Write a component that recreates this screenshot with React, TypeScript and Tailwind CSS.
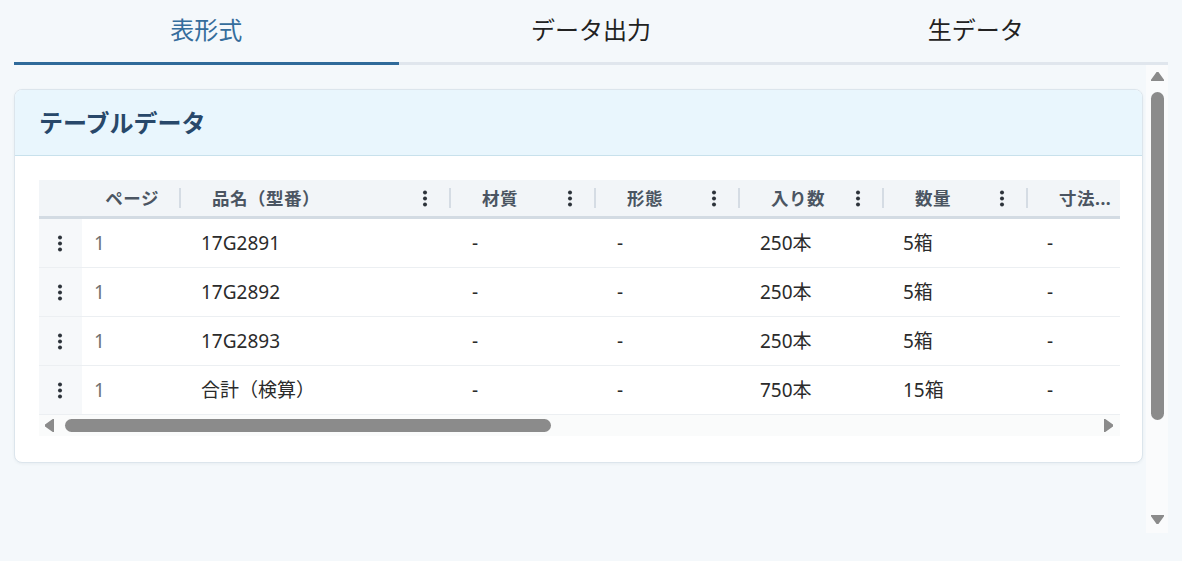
import { ReactNode } from 'react'

interface Row {
  page: string
  name: string
  material: string
  form: string
  perUnit: string
  qty: string
  size: string
}

const rows: Row[] = [
  { page: '1', name: '17G2891', material: '-', form: '-', perUnit: '250本', qty: '5箱', size: '-' },
  { page: '1', name: '17G2892', material: '-', form: '-', perUnit: '250本', qty: '5箱', size: '-' },
  { page: '1', name: '17G2893', material: '-', form: '-', perUnit: '250本', qty: '5箱', size: '-' },
  { page: '1', name: '合計（検算）', material: '-', form: '-', perUnit: '750本', qty: '15箱', size: '-' },
]

const tabs = ['表形式', 'データ出力', '生データ']

// column grid shared by header and body rows
const cols = 'grid grid-cols-[43px_99px_270px_145px_144px_144px_144px_92px]'

const Kebab = ({ className = '' }: { className?: string }) => (
  <svg width="6" height="17" viewBox="0 0 6 17" className={className}>
    <circle cx="3" cy="2.5" r="2" fill="#2d333a" />
    <circle cx="3" cy="8.5" r="2" fill="#2d333a" />
    <circle cx="3" cy="14.5" r="2" fill="#2d333a" />
  </svg>
)

const Sep = () => <div className="w-[2px] h-[20px] bg-[#d5dce4] shrink-0" />

const HeadCell = ({ children, menu = true }: { children: ReactNode; menu?: boolean }) => (
  <div className="flex items-center h-full pl-[31px] min-w-0">
    <span className="whitespace-nowrap">{children}</span>
    <div className="flex-1" />
    {menu && <Kebab className="mr-[21px]" />}
    <Sep />
  </div>
)

const Arrow = ({ dir }: { dir: 'up' | 'down' | 'left' | 'right' }) => {
  const pts = {
    up: '0,9 6.5,0 13,9',
    down: '0,0 13,0 6.5,9',
    left: '9,0 9,13 0,6.5',
    right: '0,0 9,6.5 0,13',
  }[dir]
  const vertical = dir === 'up' || dir === 'down'
  return (
    <svg width={vertical ? 13 : 9} height={vertical ? 9 : 13} viewBox={vertical ? '0 0 13 9' : '0 0 9 13'}>
      <polygon points={pts} fill="#8b8b8b" strokeLinejoin="round" stroke="#8b8b8b" strokeWidth="1.5" />
    </svg>
  )
}

export default function App() {
  return (
    <div
      className="h-[561px] w-[1182px] bg-[#f4f8fb] px-[14px] overflow-hidden"
      style={{ fontFamily: '"Noto Sans", "Noto Sans CJK JP", sans-serif' }}
    >
      {/* Tabs */}
      <div className="flex w-[1154px]">
        {tabs.map((t, i) => (
          <div
            key={t}
            className={`flex-1 h-[65px] flex items-center justify-center text-[24px] pb-[3px] border-b-[3px] ${
              i === 0 ? 'border-[#2f6a9a] text-[#356d9c]' : 'border-[#e0e6ed] text-[#222]'
            }`}
          >
            {t}
          </div>
        ))}
      </div>

      <div className="flex h-[468px]">
        {/* scroll content */}
        <div className="w-[1129px] pt-[24px]">
          <div className="bg-white border border-[#dce5ec] rounded-[8px] shadow-[0_1px_3px_rgba(30,60,90,0.06)] overflow-hidden">
            <div className="h-[66px] bg-[#e9f6fd] border-b border-[#c8e1ec] flex items-center pl-[24px]">
              <h2 className="text-[24px] font-bold text-[#28486a]">テーブルデータ</h2>
            </div>

            <div className="pt-[24px] pb-[26px] pl-[24px] pr-[22px]">
              {/* header */}
              <div className={`${cols} h-[39px] bg-[#f2f5f8] border-b-[3px] border-[#d3dbe3] text-[17.5px] font-bold text-[#4b5562] tracking-[0.5px]`}>
                <div />
                <div className="flex items-center h-full justify-end">
                  <span className="mr-[20px] whitespace-nowrap">ページ</span>
                  <Sep />
                </div>
                <HeadCell>品名（型番）</HeadCell>
                <HeadCell>材質</HeadCell>
                <HeadCell>形態</HeadCell>
                <HeadCell>入り数</HeadCell>
                <HeadCell>数量</HeadCell>
                <div className="flex items-center h-full pl-[31px]">
                  <span className="whitespace-nowrap">寸法...</span>
                </div>
              </div>

              {/* body */}
              {rows.map((r, i) => (
                <div key={i} className={`${cols} h-[49px] border-b border-[#eceff2] text-[19px] text-[#2b2b2b]`}>
                  <div className="bg-[#f6f8fa] flex items-center pl-[18px]">
                    <Kebab />
                  </div>
                  <div className="flex items-center pl-[12px] text-[#707070]">{r.page}</div>
                  <div className="flex items-center pl-[20px] whitespace-nowrap">{r.name}</div>
                  <div className="flex items-center pl-[21px]">{r.material}</div>
                  <div className="flex items-center pl-[21px]">{r.form}</div>
                  <div className="flex items-center pl-[20px]">{r.perUnit}</div>
                  <div className="flex items-center pl-[19px]">{r.qty}</div>
                  <div className="flex items-center pl-[19px]">{r.size}</div>
                </div>
              ))}

              {/* horizontal scrollbar */}
              <div className="h-[21px] bg-[#fafbfb] flex items-center pl-[6px] pr-[7px]">
                <Arrow dir="left" />
                <div className="ml-[11px] w-[486px] h-[13px] rounded-full bg-[#8b8b8b]" />
                <div className="flex-1" />
                <Arrow dir="right" />
              </div>
            </div>
          </div>
        </div>

        {/* vertical scrollbar */}
        <div className="ml-[3px] w-[22px] bg-[#fafbfc] flex flex-col items-center pt-[7px] pb-[9px]">
          <Arrow dir="up" />
          <div className="mt-[11px] w-[13px] h-[328px] rounded-full bg-[#8b8b8b]" />
          <div className="flex-1" />
          <Arrow dir="down" />
        </div>
      </div>
    </div>
  )
}
